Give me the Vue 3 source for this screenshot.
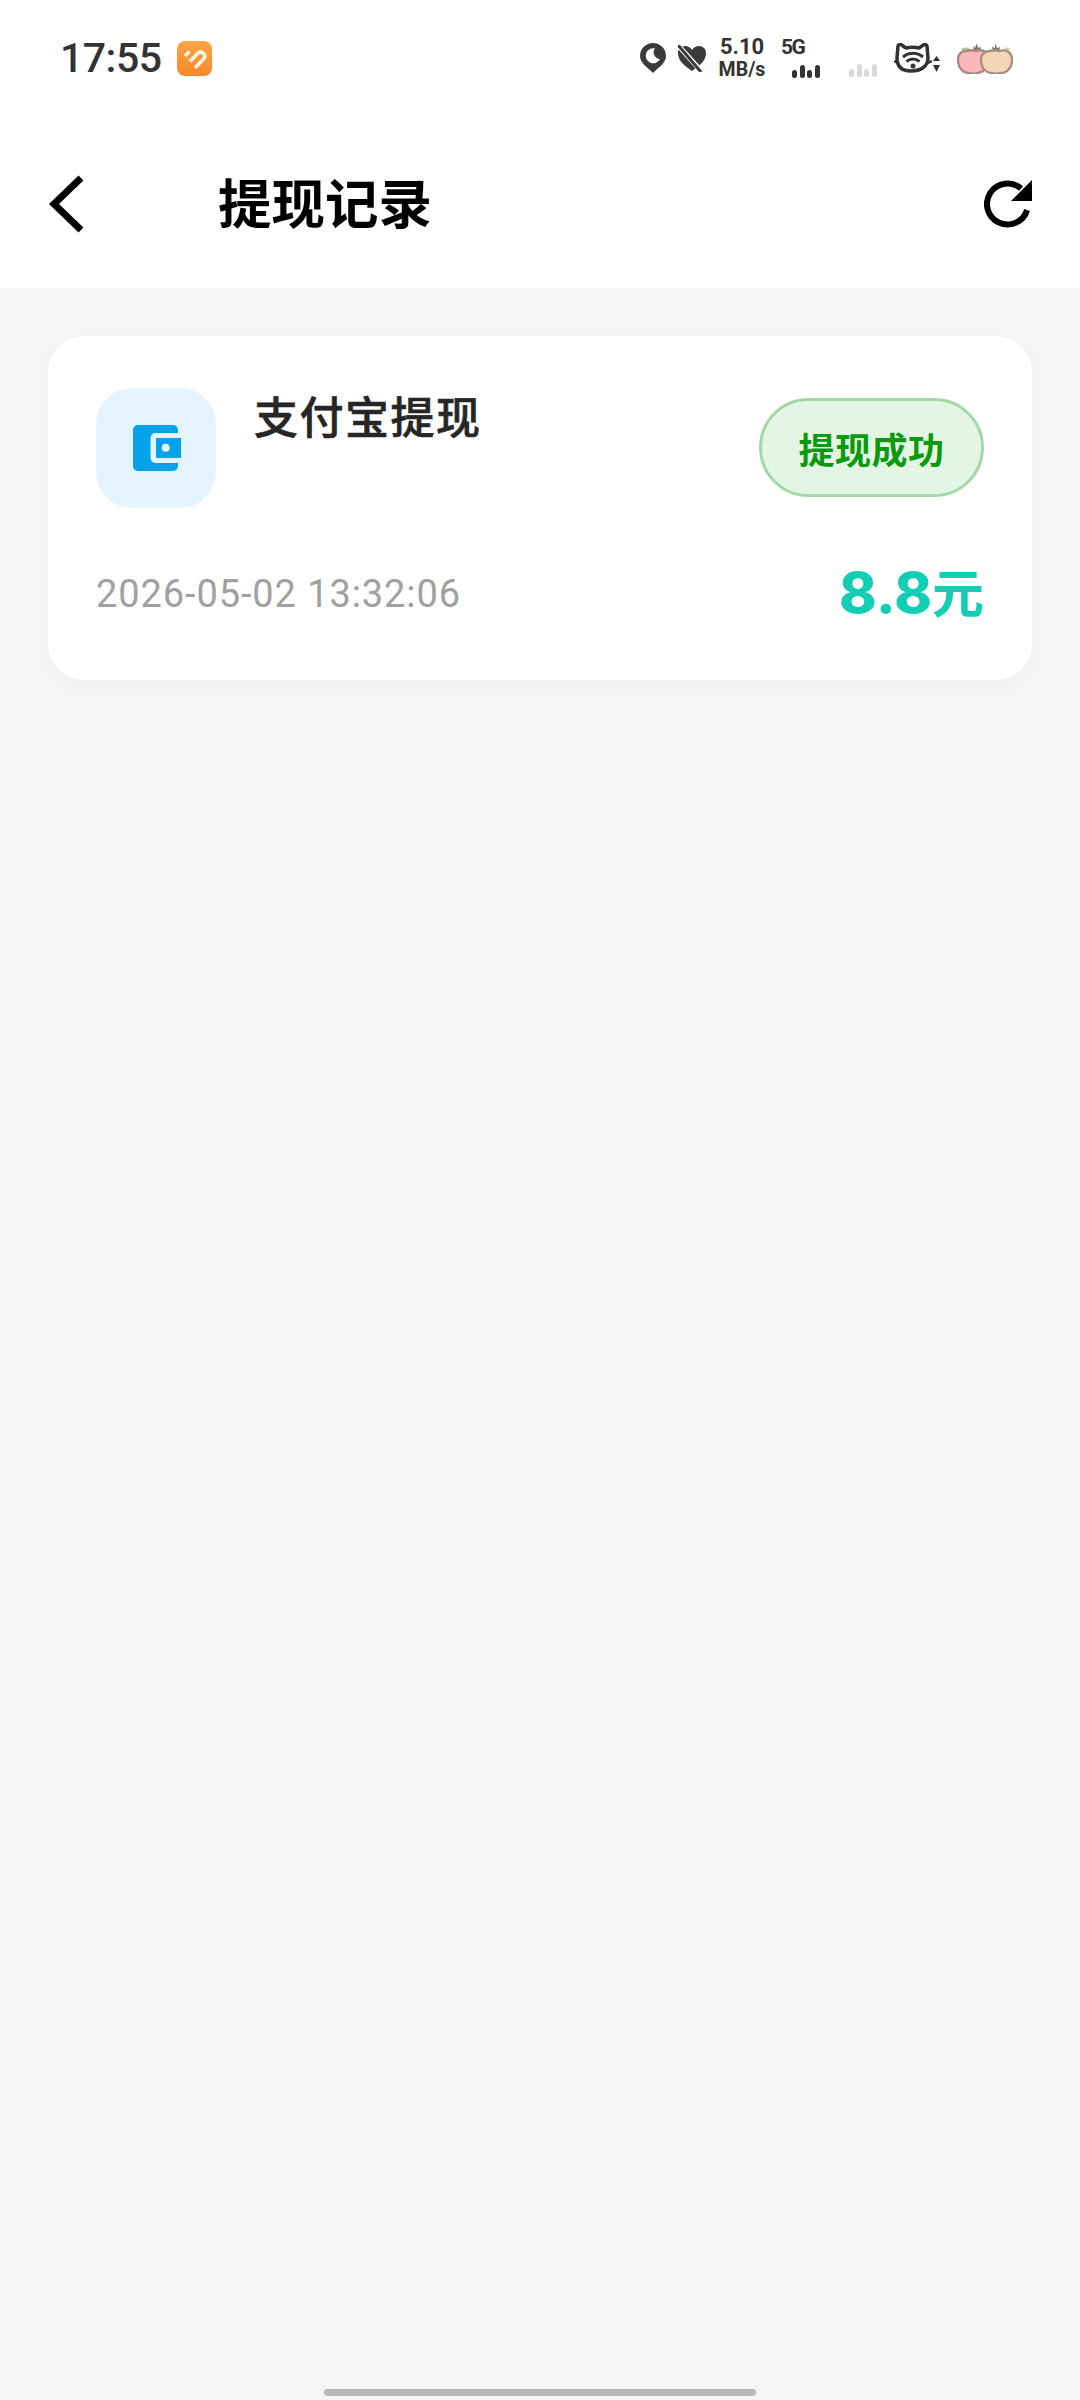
<template>
  <div class="page">
    <div class="status-bar">
      <span class="time">17:55</span>
      <svg class="app-badge" viewBox="0 0 35 35" width="35" height="35">
        <defs>
          <linearGradient id="badge-fill" x1="0" y1="0" x2="0" y2="1">
            <stop offset="0" stop-color="#fba544" />
            <stop offset="1" stop-color="#f9882a" />
          </linearGradient>
        </defs>
        <rect width="35" height="35" rx="8" fill="url(#badge-fill)" />
        <path d="M8 15l4.500-4.500M13 20.500l7.500-8c3-3 9 0 7 4.500L18 27" stroke="#fff3e4" stroke-width="3.600" fill="none" />
      </svg>
      <div class="status-right">
        <svg viewBox="0 0 26 30" width="26" height="30">
          <path d="M13 0a13 13 0 0 1 13 13c0 7-7 11-13 17C7 24 0 20 0 13A13 13 0 0 1 13 0z" fill="#3a3a3a" />
          <path d="M15 5.500a7.500 7.500 0 1 0 5 10.500 6.500 6.500 0 0 1-5-10.500z" fill="#fff" />
        </svg>
        <svg class="heart" viewBox="0 0 28 27" width="28" height="27">
          <path d="M14 26C7 21 0 16 0 8c0-4 3-7 7-7 3 0 5 1 7 4 2-3 4-4 7-4 4 0 7 3 7 7 0 8-7 13-14 18z" fill="#3a3a3a" />
          <path d="M-1-1l24 27" stroke="#fff" stroke-width="5" />
          <path d="M0 0l23 27" stroke="#3a3a3a" stroke-width="3" />
        </svg>
        <div class="speed">
          <span class="speed-num">5.10</span>
          <span class="speed-unit">MB/s</span>
        </div>
        <div class="net">
          <span class="net-label">5G</span>
          <svg viewBox="0 0 28 14" width="28" height="14">
            <rect v-for="bar in signalBars" :key="bar.x" :x="bar.x" :y="bar.y" width="5" :height="14 - bar.y" rx="2.500" fill="#333" />
          </svg>
        </div>
        <svg class="signal-off" viewBox="0 0 28 14" width="28" height="14">
          <rect v-for="bar in signalBars" :key="bar.x" :x="bar.x" :y="bar.y" width="5" :height="14 - bar.y" rx="2.500" fill="#d8d8d8" />
        </svg>
        <svg class="cat" viewBox="0 0 52 30" width="52" height="30">
          <path d="M4 3c1-2 3-2 5 0l3 2c4-1 9-1 13 0l3-2c2-2 4-2 5 0l1 12c0 8-7 13-17 13S3 23 3 15z" fill="#fff" stroke="#333" stroke-width="3.500" stroke-linejoin="round" />
          <path d="M9 14c6-5 14-5 20 0M12.500 18.500c4-3 9-3 13 0" fill="none" stroke="#333" stroke-width="3" />
          <circle cx="19" cy="23" r="2.500" fill="#333" />
          <path d="M0 18l4 2M34 20l4-2" stroke="#333" stroke-width="2.500" />
          <path d="M39 17h7l-3.500-5zM39 21h7l-3.500 7z" fill="#333" transform="translate(0 1)" />
        </svg>
        <svg class="apples" viewBox="0 0 56 32" width="56" height="32">
          <path d="M4 8c2-3 5-3 9-1l5 0-1-3 4-1 1 4c-3 2-13 3-18 1z" fill="#b9c987" />
          <path d="M19 1l2 5 3-1-1 5h-6l-1-5 3 1z" fill="#8a6f6c" />
          <path d="M46 8c2-3 4-3 7-2l-3 5h-7z" fill="#c5d88d" />
          <path d="M38 1l2 5 3-1-1 5h-6l-1-5 3 1z" fill="#8a6f6c" />
          <path d="M9 9c4-1 7-1 10 0 6-2 12 0 12 9 0 8-5 12-10 13-4 1-6 1-9 0C6 31 1 26 1 18 1 12 4 9 9 9z" fill="#fdb7b9" stroke="#a58a88" stroke-width="2.400" />
          <path d="M33 9c3-1 6-1 9 0 7-2 13 1 13 9 0 8-5 13-11 13-3 1-6 1-9 0-7 0-11-6-11-13 0-5 3-9 9-9z" fill="#f5d5b6" stroke="#a58f80" stroke-width="2.400" />
        </svg>
      </div>
    </div>

    <header class="nav">
      <svg class="back" viewBox="0 0 36 58" width="36" height="58">
        <path d="M33 3L6 29l27 26" fill="none" stroke="#000" stroke-width="7" />
      </svg>
      <h1 class="nav-title">提现记录</h1>
      <svg class="refresh" viewBox="0 0 48 48" width="48" height="48">
        <path d="M43.100 30A20.500 20.500 0 1 1 37 8.600" fill="none" stroke="#000" stroke-width="6" />
        <path d="M48 0v21H27z" fill="#000" />
      </svg>
    </header>

    <main class="content">
      <div v-for="(record, index) in records" :key="index" class="card">
        <div class="card-top">
          <div class="icon-box">
            <svg class="wallet" viewBox="0 0 48 46" width="48" height="46">
              <rect width="45" height="46" rx="5" fill="#05a2ea" />
              <rect x="17.500" y="8" width="31" height="30" rx="5" fill="#e3f4fd" />
              <rect x="23" y="13" width="25" height="20" fill="#05a2ea" />
              <circle cx="32.700" cy="22.700" r="4" fill="#e3f4fd" />
            </svg>
          </div>
          <div class="card-title">{{ record.title }}</div>
          <div class="badge">{{ record.status }}</div>
        </div>
        <div class="card-bottom">
          <span class="date">{{ record.time }}</span>
          <span class="amount">{{ record.amount }}<span class="unit">元</span></span>
        </div>
      </div>
    </main>

    <div class="home-bar"></div>
  </div>
</template>

<script setup>
const signalBars = [
  { x: 0, y: 6 },
  { x: 8, y: 1 },
  { x: 15, y: 6 },
  { x: 23, y: 1 },
]

const records = [
  {
    title: '支付宝提现',
    status: '提现成功',
    time: '2026-05-02 13:32:06',
    amount: '8.8',
  },
]
</script>

<style>
body {
  margin: 0;
}
</style>

<style scoped>
.page {
  width: 1080px;
  height: 2400px;
  display: flex;
  flex-direction: column;
  background: #f5f5f5;
  font-family: Roboto, "Noto Sans CJK SC", sans-serif;
}

.status-bar {
  height: 116px;
  box-sizing: border-box;
  background: #fff;
  display: flex;
  align-items: center;
  padding: 0 67px 0 60px;
}

.time {
  font-size: 41px;
  font-weight: 500;
  color: #333;
  letter-spacing: -0.5px;
}

.app-badge {
  margin-left: 15px;
}

.status-right {
  margin-left: auto;
  display: flex;
  align-items: center;
}

.heart {
  margin-left: 12px;
}

.speed {
  margin-left: 11px;
  width: 50px;
  display: flex;
  flex-direction: column;
  align-items: center;
  color: #333;
  font-weight: 700;
  line-height: 22px;
}

.speed-num {
  font-size: 22px;
}

.speed-unit {
  font-size: 19.5px;
  margin-top: 1px;
}

.net {
  margin-left: 14px;
  width: 39px;
  display: flex;
  flex-direction: column;
  align-items: flex-end;
  color: #333;
}

.net-label {
  align-self: flex-start;
  font-size: 21px;
  font-weight: 700;
  letter-spacing: -1.5px;
  line-height: 16px;
  margin-bottom: 9px;
}

.signal-off {
  margin: 24px 0 0 29px;
}

.cat {
  margin-left: 17px;
}

.apples {
  margin-left: 11px;
}

.nav {
  height: 172px;
  box-sizing: border-box;
  background: #fff;
  display: flex;
  align-items: center;
  padding: 4px 48px 0;
}

.nav-title {
  margin: 4px 0 0 134px;
  font-size: 53.5px;
  font-weight: 700;
  color: #000;
  line-height: 60px;
}

.refresh {
  margin-left: auto;
}

.content {
  flex: 1;
  padding: 48px;
}

.card {
  height: 344px;
  box-sizing: border-box;
  background: #fff;
  border-radius: 36px;
  padding: 52px 48px 0;
  box-shadow: 0 6px 24px rgba(0, 0, 0, 0.03);
}

.card-top {
  display: flex;
  align-items: flex-start;
}

.icon-box {
  width: 120px;
  height: 120px;
  border-radius: 36px;
  background: #e3f4fd;
  display: flex;
  align-items: center;
  justify-content: center;
}

.wallet {
  margin-left: 2px;
}

.card-title {
  margin: 2px 0 0 38px;
  font-size: 44px;
  font-weight: 500;
  -webkit-text-stroke: 0.6px #262626;
  letter-spacing: 1.5px;
  line-height: 58px;
  color: #262626;
}

.badge {
  margin: 10px 0 0 auto;
  width: 225px;
  height: 99px;
  box-sizing: border-box;
  border: 3px solid #a3d9a5;
  border-radius: 50px;
  background: #e5f5e5;
  color: #0a9a0f;
  font-size: 36px;
  font-weight: 700;
  letter-spacing: 0.5px;
  display: flex;
  align-items: center;
  justify-content: center;
}

.card-bottom {
  margin-top: 56px;
  display: flex;
  align-items: center;
  justify-content: space-between;
  height: 60px;
}

.date {
  font-size: 38px;
  letter-spacing: 0.9px;
  color: #a0a0a0;
}

.amount {
  font-family: Inter, "Noto Sans CJK SC", sans-serif;
  font-size: 57px;
  font-weight: 800;
  line-height: 60px;
  color: #14cdb5;
}

.unit {
  font-size: 52px;
  font-weight: 700;
}

.home-bar {
  width: 432px;
  height: 7px;
  border-radius: 4px;
  background: #b9b9b9;
  margin: 0 auto 4px;
}
</style>
